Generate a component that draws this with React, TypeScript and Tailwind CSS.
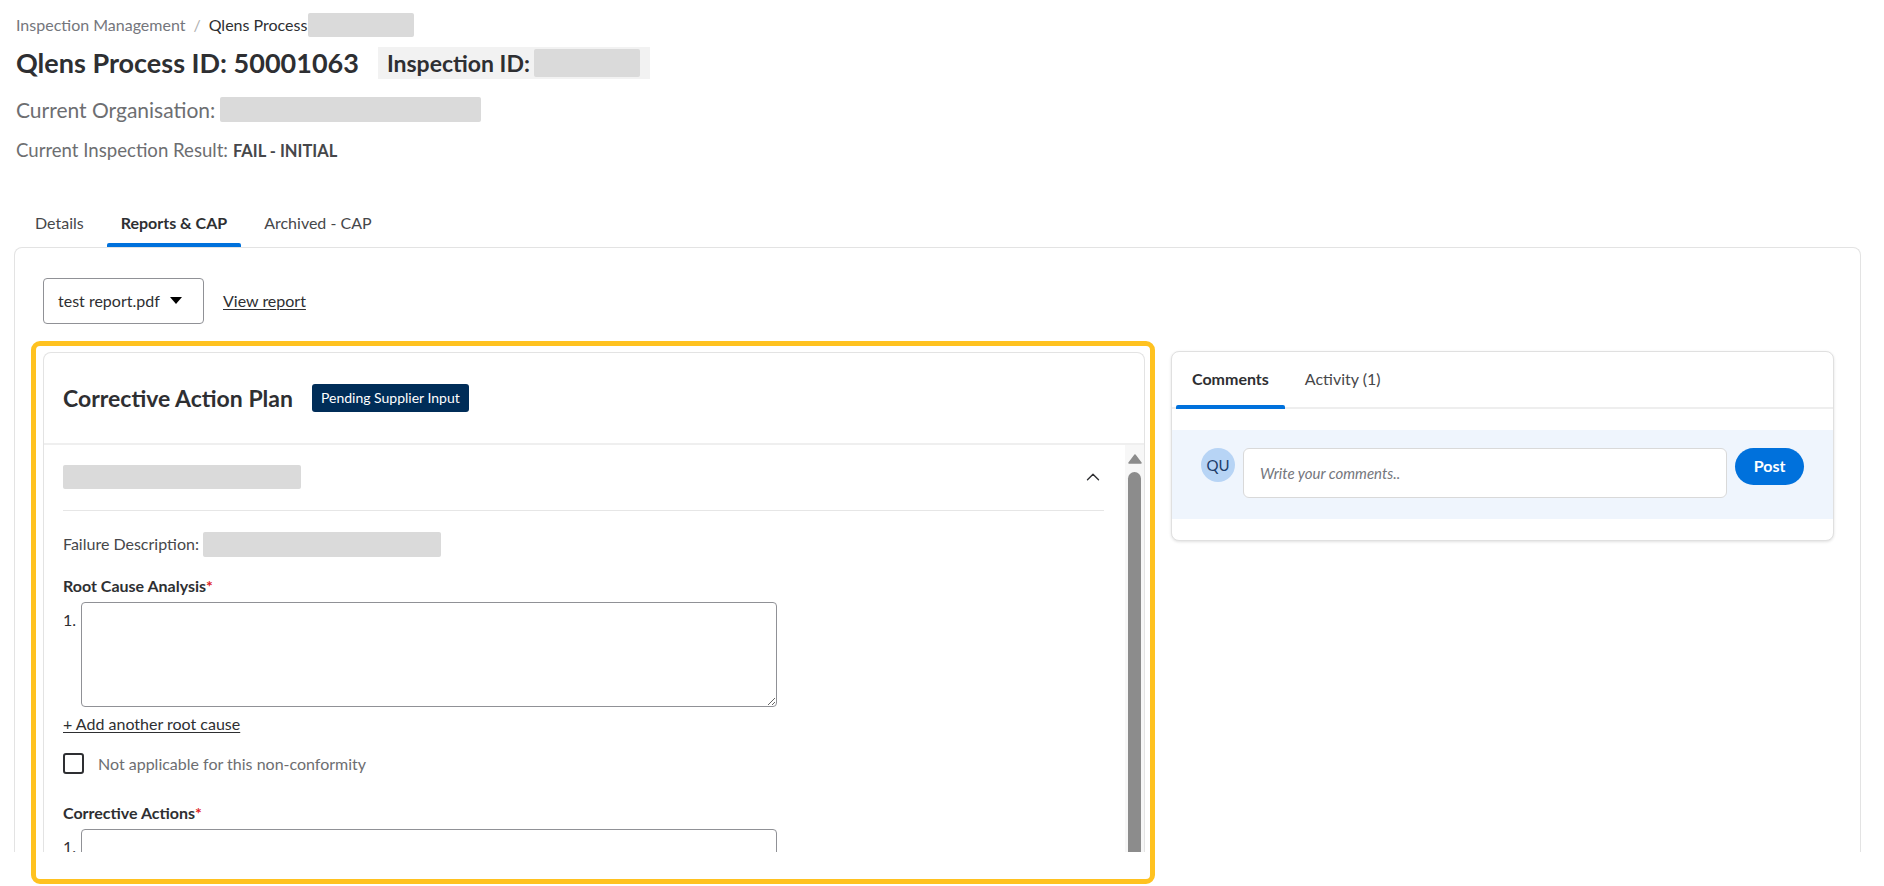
import { ChevronUp } from "lucide-react";

const font = { fontFamily: "Lato, 'Open Sans', sans-serif" };

function Blur({ className }: { className: string }) {
  return <span className={`inline-block rounded-[2px] bg-[#dadada] blur-[0.6px] ${className}`} />;
}

function Scrollbar() {
  return (
    <div className="flex w-[19px] shrink-0 flex-col items-center bg-[#f7f7f7] pt-[9px]">
      <svg width="14" height="10" viewBox="0 0 14 10">
        <path d="M7 1 L13 9 L1 9 Z" fill="#8c8c8c" stroke="#8c8c8c" strokeLinejoin="round" strokeWidth="1.5" />
      </svg>
      <div className="mt-[8px] w-[13px] flex-1 rounded-t-full bg-[#8c8c8c]" />
    </div>
  );
}

function CapCard() {
  return (
    <div className="flex w-[1102px] shrink-0 flex-col self-stretch rounded-t-[8px] border border-b-0 border-[#e3e3e3] bg-white">
      <div className="flex h-[92px] items-center gap-[19px] border-b-2 border-[#efefef] px-[19px]">
        <h2 className="text-[23px] font-bold text-[#2e2f32]">Corrective Action Plan</h2>
        <span className="rounded-[3px] bg-[#002d58] px-[9px] py-[4px] text-[14px] leading-[20px] text-white">
          Pending Supplier Input
        </span>
      </div>
      <div className="flex flex-1 overflow-hidden">
        <div className="flex-1 pl-[19px] pr-[21px]">
          <div className="flex h-[66px] items-center justify-between border-b border-[#e6e6e6]">
            <Blur className="h-[24px] w-[238px]" />
            <ChevronUp size={22} strokeWidth={1.5} className="text-[#2e2f32]" />
          </div>
          <div className="mt-[21px] flex items-center text-[16px] text-[#46474a]">
            Failure Description:
            <Blur className="ml-[4px] h-[25px] w-[238px]" />
          </div>
          <div className="mt-[17px] text-[16px] font-bold text-[#2e2f32]">
            Root Cause Analysis<span className="text-[#de1c24]">*</span>
          </div>
          <div className="mt-[4px] flex gap-[5px] text-[16px] text-[#2e2f32]">
            <span className="pt-[6px]">1.</span>
            <textarea className="h-[105px] w-[696px] rounded-[4px] border border-[#909196] outline-none" />
          </div>
          <a className="mt-[5px] inline-block text-[16px] text-[#2e2f32] underline underline-offset-2">
            + Add another root cause
          </a>
          <label className="mt-[16px] flex items-center gap-[14px] text-[16px] text-[#6d6e71]">
            <span className="h-[21px] w-[21px] rounded-[3px] border-2 border-[#2e2f32]" />
            Not applicable for this non-conformity
          </label>
          <div className="mt-[25px] text-[16px] font-bold text-[#2e2f32]">
            Corrective Actions<span className="text-[#de1c24]">*</span>
          </div>
          <div className="mt-[4px] flex gap-[5px] text-[16px] text-[#2e2f32]">
            <span className="pt-[6px]">1.</span>
            <div className="h-[60px] w-[696px] rounded-[4px] border border-[#909196]" />
          </div>
        </div>
        <Scrollbar />
      </div>
    </div>
  );
}

function CommentsCard() {
  return (
    <div className="-mt-[1px] w-[663px] self-start rounded-[8px] border border-[#e0e0e0] bg-white pb-[21px] shadow-[0_1px_3px_rgba(0,0,0,0.12)]">
      <div className="flex h-[57px] gap-[12px] border-b-2 border-[#eeeeee] pl-[4px]">
        <div className="relative flex items-center px-[16px] text-[16px] font-bold text-[#2e2f32]">
          Comments
          <span className="absolute bottom-[-2px] left-0 right-0 h-[4px] rounded-t-[2px] bg-[#0071dc]" />
        </div>
        <div className="flex items-center px-[8px] text-[16px] text-[#46474a]">Activity (1)</div>
      </div>
      <div className="mt-[21px] flex h-[89px] items-start gap-[8px] bg-[#eff5fd] px-[29px] pt-[18px]">
        <div className="flex h-[34px] w-[34px] items-center justify-center rounded-full bg-[#b7d4f5] text-[15px] text-[#1d3d6b]">
          QU
        </div>
        <input
          placeholder="Write your comments.."
          className="h-[50px] w-[485px] rounded-[6px] border border-[#d9d9d9] bg-white px-[16px] text-[15px] italic text-[#2e2f32] outline-none placeholder:text-[#74767c]"
        />
        <button className="h-[37px] w-[69px] rounded-full bg-[#0071dc] text-[16px] font-bold text-white">Post</button>
      </div>
    </div>
  );
}

export default function App() {
  return (
    <div style={font} className="relative h-[886px] w-[1884px] overflow-hidden bg-white">
      <div className="flex h-[852px] flex-col overflow-hidden">
        <div className="px-[16px] pt-[13px]">
          <div className="flex items-center text-[16px] text-[#74767c]">
            Inspection Management
            <span className="mx-[8px] text-[#b0b0b0]">/</span>
            <span className="text-[#2e2f32]">Qlens Process</span>
            <Blur className="ml-[1px] h-[24px] w-[106px]" />
          </div>
          <div className="mt-[6px] flex items-center gap-[19px]">
            <h1 className="text-[27px] font-bold text-[#2e2f32]">Qlens Process ID: 50001063</h1>
            <div className="flex h-[32px] items-center bg-[#f2f2f2] pl-[9px] pr-[10px] text-[23px] font-bold text-[#2e2f32]">
              Inspection ID:
              <Blur className="ml-[4px] h-[28px] w-[106px]" />
            </div>
          </div>
          <div className="mt-[10px] flex items-center text-[21px] text-[#6d6e71]">
            Current Organisation:
            <Blur className="ml-[5px] h-[25px] w-[261px]" />
          </div>
          <div className="mt-[12px] flex items-baseline text-[18.6px] text-[#6d6e71]">
            Current Inspection Result:
            <span className="ml-[5px] text-[16.5px] font-bold text-[#46474a]">FAIL - INITIAL</span>
          </div>
        </div>

        <div className="mt-[34px] flex pl-[21px] text-[16px]">
          {["Details", "Reports & CAP", "Archived - CAP"].map((t, i) => (
            <div
              key={t}
              className={`relative mr-[9px] flex h-[48px] items-center px-[14px] ${
                i === 1 ? "font-bold text-[#2e2f32]" : "text-[#46474a]"
              }`}
            >
              {t}
              {i === 1 && <span className="absolute bottom-0 left-0 right-0 h-[4px] rounded-t-[2px] bg-[#0071dc]" />}
            </div>
          ))}
        </div>

        <div className="ml-[14px] flex w-[1847px] flex-1 flex-col rounded-t-[8px] border border-b-0 border-[#e3e3e3] px-[28px] pt-[30px]">
          <div className="flex items-center gap-[19px]">
            <button className="flex h-[46px] w-[161px] items-center gap-[10px] rounded-[4px] border border-[#909196] px-[14px] text-[16px] text-[#2e2f32]">
              test report.pdf
              <svg width="12" height="8" viewBox="0 0 12 8">
                <path d="M0 0 H12 L6 7 Z" fill="#000" />
              </svg>
            </button>
            <a className="text-[16px] text-[#2e2f32] underline underline-offset-2">View report</a>
          </div>
          <div className="mt-[28px] flex flex-1 gap-[26px]">
            <CapCard />
            <CommentsCard />
          </div>
        </div>
      </div>
      <div className="pointer-events-none absolute left-[31px] top-[341px] h-[543px] w-[1124px] rounded-[9px] border-[5px] border-[#ffc220]" />
    </div>
  );
}
